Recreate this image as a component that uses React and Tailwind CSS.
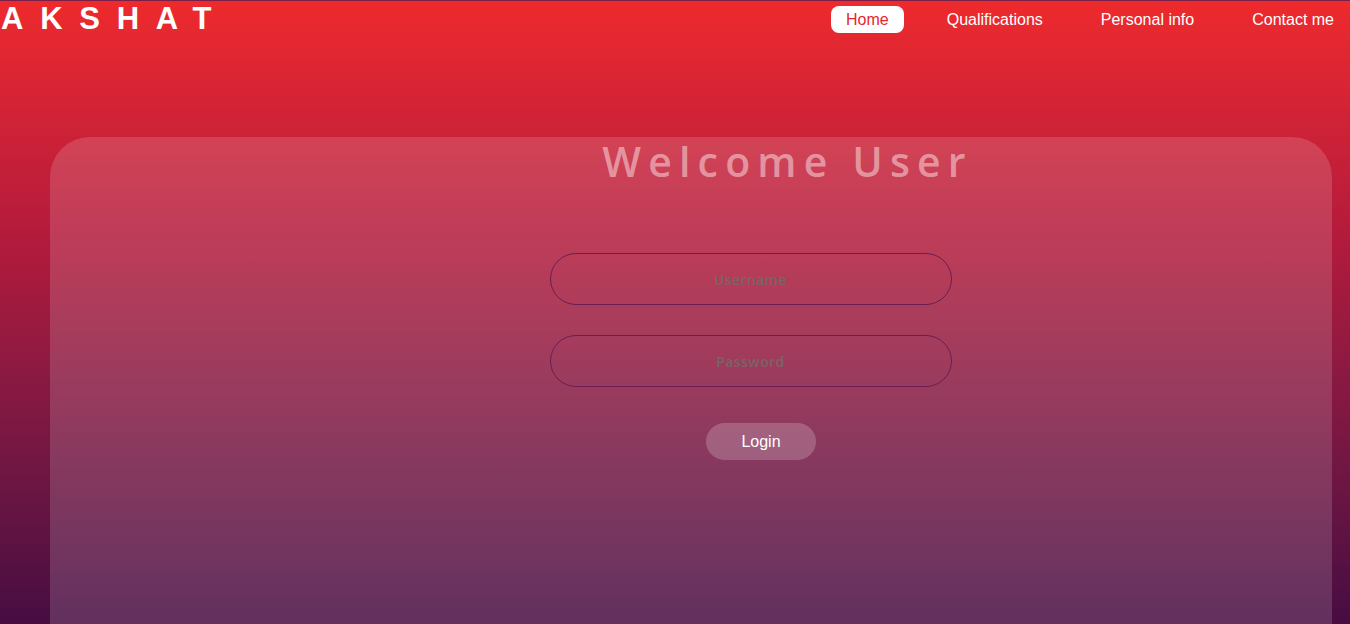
import React from "react";

const navItems = ["Home", "Qualifications", "Personal info", "Contact me"];

function NavBar() {
  return (
    <nav className="flex items-center justify-between h-[40px] border-t border-[#7a1f4a]">
      <div className="text-[31px] font-bold text-white tracking-[0.54em] leading-none pl-[1px] mt-[-4px] font-['Liberation_Sans',Arial,sans-serif]">
        AKSHAT
      </div>
      <ul className="flex items-center gap-[58px] pr-[16px] mt-[-2px] font-['Liberation_Sans',Arial,sans-serif] text-[16px] leading-[19px]">
        {navItems.map((item, i) => (
          <li key={item} className={i === 0 ? "mr-[-15px]" : ""}>
            <a
              href="#"
              className={
                i === 0
                  ? "block px-[15px] py-[4px] rounded-[8px] bg-white text-[#e8262d]"
                  : "block py-[4px] text-white"
              }
            >
              {item}
            </a>
          </li>
        ))}
      </ul>
    </nav>
  );
}

function LoginCard() {
  return (
    <div className="ml-[50px] mr-[18px] mt-[97px] h-[520px] rounded-t-[40px] bg-white/15 flex flex-col items-center">
      <h1 className="ml-[193px] mt-[-1px] text-[41px] font-semibold tracking-[0.175em] text-white/45 leading-[50px] font-['Open_Sans','Noto_Sans',sans-serif]">
        Welcome User
      </h1>
      <form className="ml-[119px] mt-[67px] flex flex-col items-center font-['Open_Sans','Noto_Sans',sans-serif]">
        <input
          type="text"
          placeholder="Username"
          className="w-[402px] h-[52px] rounded-full border border-[#6a1e55] bg-transparent text-center text-[14px] font-semibold tracking-[0.03em] placeholder:text-[#7d6266] outline-none"
        />
        <input
          type="password"
          placeholder="Password"
          className="mt-[30px] w-[402px] h-[52px] rounded-full border border-[#6a1e55] bg-transparent text-center text-[14px] font-semibold tracking-[0.03em] placeholder:text-[#7d6266] outline-none"
        />
        <button
          type="button"
          className="mt-[36px] ml-[21px] w-[110px] h-[37px] rounded-full bg-white/20 text-white text-[16px] font-['Liberation_Sans',Arial,sans-serif]"
        >
          Login
        </button>
      </form>
    </div>
  );
}

export default function App() {
  return (
    <div className="h-[624px] w-full overflow-hidden bg-gradient-to-b from-[#ee2a2c] via-[#b01a3c] via-40% to-[#470c42]">
      <NavBar />
      <LoginCard />
    </div>
  );
}
